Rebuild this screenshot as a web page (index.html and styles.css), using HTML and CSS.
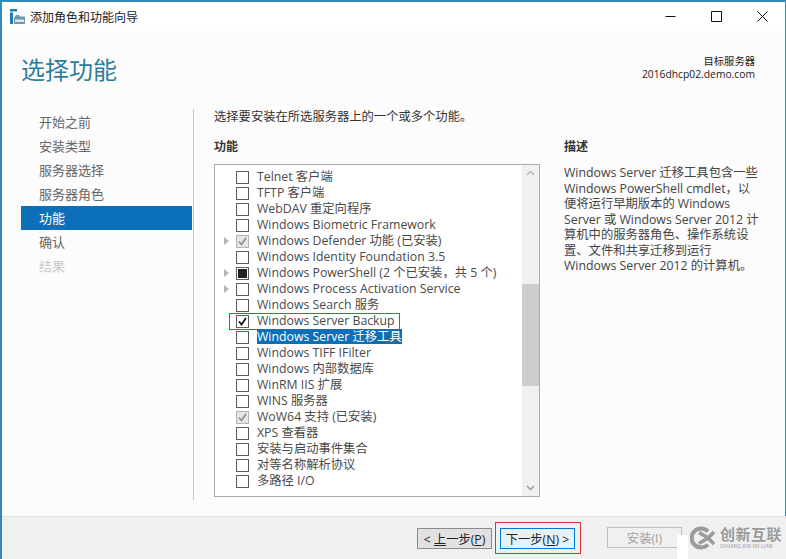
FILE: index.html
```html
<!DOCTYPE html>
<html lang="zh-CN">
<head>
<meta charset="utf-8">
<title>添加角色和功能向导</title>
<link rel="stylesheet" href="styles.css">
</head>
<body>
<div class="window">
  <div class="titlebar">
    <svg class="appicon" width="15" height="15" viewBox="0 0 15 15"><path d="M0 0h7v2.500H0zM0 3.500h3V15H0z" fill="#1b7fb8"/><path d="M4 9l2-3h3l1 1.500h5V15H4z" fill="#6f99ad"/><path d="M5 10.500h9v2.500H5z" fill="#dfe8ed"/></svg>
    <span class="wintitle">添加角色和功能向导</span>
    <div class="controls">
      <svg width="11" height="11" viewBox="0 0 11 11"><path d="M0.500 5.500h10" stroke="#111" stroke-width="1" fill="none"/></svg>
      <svg width="11" height="11" viewBox="0 0 11 11"><path d="M0.500 0.500h10v10h-10z" stroke="#111" stroke-width="1" fill="none"/></svg>
      <svg width="11" height="11" viewBox="0 0 11 11"><path d="M0.500 0.500l10 10M10.500 0.500l-10 10" stroke="#111" stroke-width="1" fill="none"/></svg>
    </div>
  </div>
  <div class="header">
    <h1 class="pagetitle">选择功能</h1>
    <div class="server"><div>目标服务器</div><div>2016dhcp02.demo.com</div></div>
  </div>
  <div class="main">
    <nav class="nav">
      <div class="navitem">开始之前</div>
      <div class="navitem">安装类型</div>
      <div class="navitem">服务器选择</div>
      <div class="navitem">服务器角色</div>
      <div class="navitem active">功能</div>
      <div class="navitem">确认</div>
      <div class="navitem off">结果</div>
    </nav>
    <div class="content">
      <p class="intro">选择要安装在所选服务器上的一个或多个功能。</p>
      <div class="columns">
        <section class="features">
          <h2 class="label">功能</h2>
          <div class="listbox">
            <div class="rows">
              <div class="row"><span class="exp"></span><span class="cb"></span><span class="txt">Telnet 客户端</span></div>
              <div class="row"><span class="exp"></span><span class="cb"></span><span class="txt">TFTP 客户端</span></div>
              <div class="row"><span class="exp"></span><span class="cb"></span><span class="txt">WebDAV 重定向程序</span></div>
              <div class="row"><span class="exp"></span><span class="cb"></span><span class="txt">Windows Biometric Framework</span></div>
              <div class="row"><span class="exp tri"></span><span class="cb grey"><svg width="11" height="11" viewBox="0 0 11 11"><path d="M2 5.500l2.500 3L9 2" stroke="#8a8a8a" stroke-width="1.600" fill="none"/></svg></span><span class="txt">Windows Defender 功能 (已安装)</span></div>
              <div class="row"><span class="exp"></span><span class="cb"></span><span class="txt">Windows Identity Foundation 3.5</span></div>
              <div class="row"><span class="exp tri"></span><span class="cb"><span class="fill"></span></span><span class="txt">Windows PowerShell (2 个已安装，共 5 个)</span></div>
              <div class="row"><span class="exp tri"></span><span class="cb"></span><span class="txt">Windows Process Activation Service</span></div>
              <div class="row"><span class="exp"></span><span class="cb"></span><span class="txt">Windows Search 服务</span></div>
              <div class="row"><span class="exp"></span><span class="cb"><svg width="11" height="11" viewBox="0 0 11 11"><path d="M2 5.500l2.500 3L9 2" stroke="#111" stroke-width="1.700" fill="none"/></svg></span><span class="txt">Windows Server Backup</span><span class="redbox"></span></div>
              <div class="row"><span class="exp"></span><span class="cb"></span><span class="txt sel">Windows Server 迁移工具</span></div>
              <div class="row"><span class="exp"></span><span class="cb"></span><span class="txt">Windows TIFF IFilter</span></div>
              <div class="row"><span class="exp"></span><span class="cb"></span><span class="txt">Windows 内部数据库</span></div>
              <div class="row"><span class="exp"></span><span class="cb"></span><span class="txt">WinRM IIS 扩展</span></div>
              <div class="row"><span class="exp"></span><span class="cb"></span><span class="txt">WINS 服务器</span></div>
              <div class="row"><span class="exp"></span><span class="cb grey"><svg width="11" height="11" viewBox="0 0 11 11"><path d="M2 5.500l2.500 3L9 2" stroke="#8a8a8a" stroke-width="1.600" fill="none"/></svg></span><span class="txt">WoW64 支持 (已安装)</span></div>
              <div class="row"><span class="exp"></span><span class="cb"></span><span class="txt">XPS 查看器</span></div>
              <div class="row"><span class="exp"></span><span class="cb"></span><span class="txt">安装与启动事件集合</span></div>
              <div class="row"><span class="exp"></span><span class="cb"></span><span class="txt">对等名称解析协议</span></div>
              <div class="row"><span class="exp"></span><span class="cb"></span><span class="txt">多路径 I/O</span></div>
            </div>
            <div class="scrollbar">
              <svg class="arrow" width="17" height="17" viewBox="0 0 17 17"><path d="M5 10l3.500-3.500L12 10" stroke="#b5b5b5" stroke-width="1.300" fill="none"/></svg>
              <div class="track"><div class="thumb"></div></div>
              <svg class="arrow" width="17" height="17" viewBox="0 0 17 17"><path d="M5 7l3.500 3.500L12 7" stroke="#9a9a9a" stroke-width="1.300" fill="none"/></svg>
            </div>
          </div>
        </section>
        <section class="desc">
          <h2 class="label">描述</h2>
          <p class="desctext">Windows Server 迁移工具包含一些<br>Windows PowerShell cmdlet，以<br>便将运行早期版本的 Windows<br>Server 或 Windows Server 2012 计<br>算机中的服务器角色、操作系统设<br>置、文件和共享迁移到运行<br>Windows Server 2012 的计算机。</p>
        </section>
      </div>
    </div>
  </div>
  <div class="footer">
    <button class="btn back">&lt; <u>上</u>一步(<u>P</u>)</button>
    <span class="nextwrap"><button class="btn next">下一步(<u>N</u>) &gt;</button></span>
    <button class="btn install" disabled>安装(I)</button>
    <div class="wmpatch"></div>
    <div class="watermark">
      <svg width="25" height="24" viewBox="0 0 25 24"><path d="M18 5.500A9.500 9.500 0 1 0 18 18.500" fill="none" stroke="#9b9b9b" stroke-width="4"/><path d="M9 6.500l9 5.500 6 6M24 6l-6 6-9 5.500" fill="none" stroke="#9b9b9b" stroke-width="3.500"/></svg>
      <div class="wmtext"><div class="wmcn">创新互联</div><div class="wmen">CHUANG XIN HU LIAN</div></div>
    </div>
  </div>
</div>
</body>
</html>
```
FILE: styles.css
```css
* { box-sizing: border-box; }
html, body { margin: 0; padding: 0; }
body {
  width: 786px;
  height: 559px;
  overflow: hidden;
  font-family: "Open Sans", "Noto Sans CJK SC", sans-serif;
  font-size: 12.3px;
  color: #4a4a4a;
}
.window {
  width: 786px;
  height: 559px;
  display: flex;
  flex-direction: column;
  background: #fcfcfc;
  border: solid #2f8db5;
  border-width: 2px 1px 0 2px;
  position: relative;
}
.titlebar {
  height: 29px;
  flex: none;
  display: flex;
  align-items: center;
  padding: 0 0 0 8px;
  background: #fff;
}
.appicon { margin-right: 5px; }
.wintitle { font-size: 12px; color: #222; }
.controls {
  margin-left: auto;
  display: flex;
  gap: 35px;
  padding-right: 17px;
}
.header {
  height: 78px;
  flex: none;
  display: flex;
  justify-content: space-between;
  padding: 0 30px 0 19px;
}
.pagetitle {
  margin: 21px 0 0;
  font-size: 24px;
  font-weight: 400;
  line-height: 36px;
  color: #2b7d9c;
}
.server {
  margin-top: 24px;
  text-align: right;
  font-size: 10.3px;
  line-height: 13px;
  color: #222;
}
.main {
  flex: 1;
  display: flex;
  min-height: 0;
  padding-left: 19px;
}
.nav {
  width: 173px;
  flex: none;
  border-right: 1px solid #c8c8c8;
  margin-right: 20px;
  padding-top: 1px;
  height: 391px;
}
.navitem {
  height: 24px;
  line-height: 24px;
  padding-left: 18px;
  font-size: 13px;
  color: #666;
}
.navitem.active { background: #0b6fba; color: #fff; width: 171px; }
.navitem.off { color: #c9c9c9; }
.content { flex: 1; min-width: 0; }
.intro { margin: 0; line-height: 14px; padding-top: 1px; color: #333; }
.columns { display: flex; margin-top: 15px; }
.features { width: 326px; flex: none; }
.label { margin: 0; font-size: 12px; line-height: 16px; font-weight: 700; color: #333; }
.listbox {
  margin-top: 9px;
  height: 333px;
  border: 1px solid #ababab;
  background: #fff;
  display: flex;
}
.rows { flex: 1; padding-top: 4px; }
.row {
  height: 16px;
  display: flex;
  align-items: center;
  position: relative;
}
.exp { width: 21px; flex: none; display: flex; justify-content: center; padding-left: 2px; }
.exp.tri::before {
  content: "";
  border-left: 5px solid #b4b4b4;
  border-top: 4px solid transparent;
  border-bottom: 4px solid transparent;
}
.cb {
  width: 13px;
  height: 13px;
  flex: none;
  border: 1px solid #5e5e5e;
  background: #fff;
  display: flex;
  align-items: center;
  justify-content: center;
}
.cb.grey { background: #e6e6e6; border-color: #b5b5b5; }
.fill { width: 9px; height: 9px; background: #222; }
.txt { margin-left: 8px; white-space: nowrap; line-height: 16px; }
.txt.sel { background: #0b6fba; color: #fff; line-height: 15px; margin-top: -1px; }
.redbox {
  position: absolute;
  left: 14px;
  top: 0;
  width: 171px;
  height: 17px;
  box-shadow: inset 0 0 0 1px #d0383f;
}
.scrollbar {
  width: 17px;
  flex: none;
  background: #f0f0f0;
  display: flex;
  flex-direction: column;
}
.arrow { flex: none; display: block; }
.track { flex: 1; padding-top: 102px; }
.thumb { height: 102px; background: #cdcdcd; }
.desc { margin-left: 24px; width: 210px; }
.desctext { margin: 10px 0 0; line-height: 15.5px; color: #444; white-space: nowrap; }
.footer {
  position: relative;
  height: 43px;
  flex: none;
  margin-right: -1px;
  background: #f0f0f0;
  border-top: 1px solid #dfdfdf;
  display: flex;
  align-items: flex-start;
  padding: 11px 0 0 415px;
}
.btn {
  width: 75px;
  height: 21px;
  padding: 0;
  font: 12.3px "Open Sans", "Noto Sans CJK SC", sans-serif;
  color: #222;
  background: #e1e1e1;
  border: 1px solid #8a8a8a;
  border-radius: 0;
}
.nextwrap {
  margin-left: 3px;
  margin-top: -6px;
  padding: 5px 5px 5px 4px;
  border: 1px solid #d0383f;
  display: block;
  height: 32px;
}
.btn.next { display: block; background: #e5f1fb; border-color: #0078d7; }
.btn.install { margin-left: 26px; margin-top: -1px; background: #f0f0f0; border-color: #bfbfbf; color: #a0a0a0; }
.wmpatch {
  position: absolute;
  left: 675px;
  bottom: 0;
  width: 11px;
  height: 24px;
  background: #fff;
}
.watermark {
  position: absolute;
  right: 0;
  top: 9px;
  width: 96px;
  display: flex;
  gap: 5px;
}
.wmtext { width: 64px; }
.wmcn { font-size: 15px; line-height: 17px; font-weight: 700; color: #9b9b9b; white-space: nowrap; letter-spacing: 0.5px; }
.wmen { font-size: 4.5px; line-height: 6px; font-weight: 700; color: #b0b0b0; white-space: nowrap; letter-spacing: 0.2px; }
```
